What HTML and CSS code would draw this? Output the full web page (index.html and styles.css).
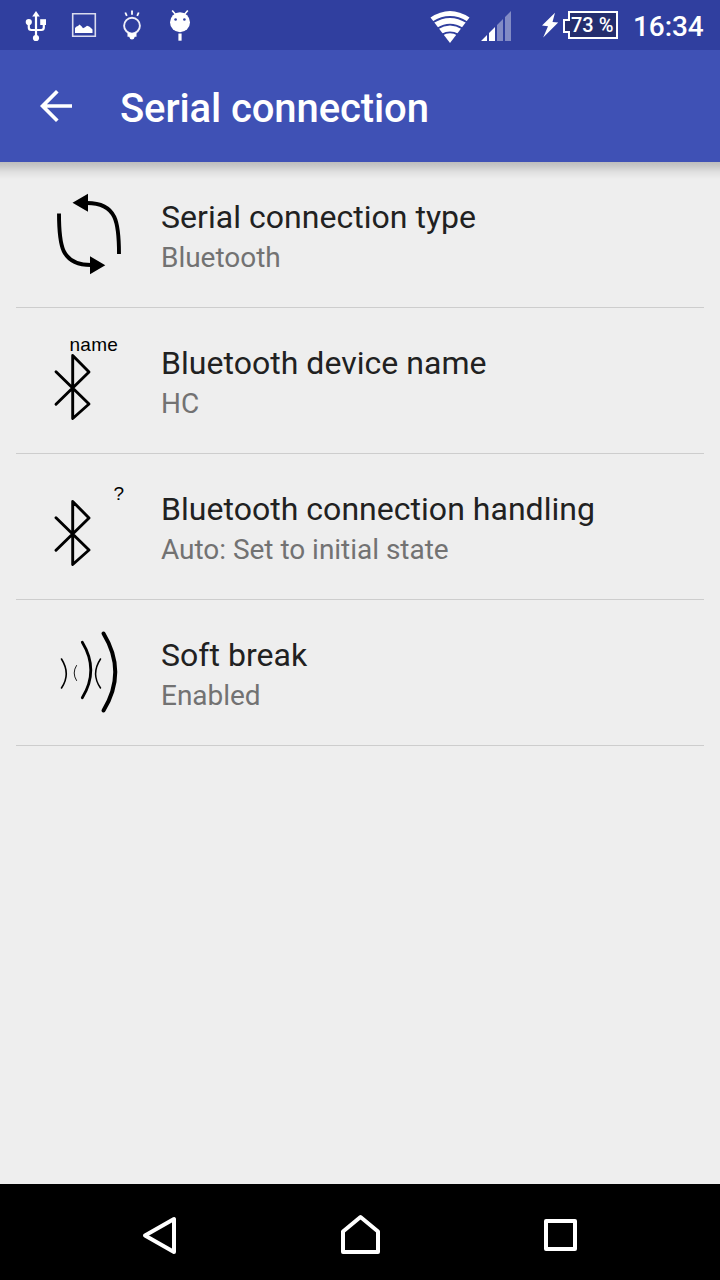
FILE: index.html
```html
<!DOCTYPE html>
<html lang="en">
<head>
<meta charset="utf-8">
<title>Serial connection</title>
<link rel="stylesheet" href="styles.css">
</head>
<body>
<div class="screen">
  <div class="status-bar">
    <div class="notifications">
      <svg class="status-icon" viewBox="12 0 48 50" fill="#fff">
        <path d="M36 11l3.8 5.4h-7.6z"/><circle cx="36" cy="38" r="3.1"/><circle cx="28.8" cy="22" r="3.1"/><path d="M40.2 19.2h5.8v5.8h-5.8z"/>
        <path d="M36 15v22M28.8 23v4.500q0 2.500 2.500 2.500h10q2.500 0 2.500-2.500V23" fill="none" stroke="#fff" stroke-width="2.200"/>
      </svg>
      <svg class="status-icon" viewBox="60 0 48 50" fill="#fff">
        <path d="M72.700 13.700h22.600v22.600H72.700z" fill="none" stroke="#d9dbee" stroke-width="1.600"/>
        <path d="M75 33v-5l1.500-1.500 1.500-.5 1.500-1.600 2 1.800 1.500 2 2-1 2-1.500 2.200.8 1.800 1.500 1.500 1.500V33z"/>
      </svg>
      <svg class="status-icon" viewBox="108 0 48 50" fill="#fff">
        <path d="M125.300 12.500l1.500 3.300M132 10.500v4.200M138.700 12.500l-1.500 3.300" stroke="#fff" stroke-width="1.800"/>
        <circle cx="132" cy="25.700" r="7.900" fill="none" stroke="#eeeef8" stroke-width="1.900"/>
        <path d="M127.500 32.500q4.500 1.600 9 0v4.300h-1.700q-.5 2.700-2.800 2.700t-2.800-2.700h-1.700z"/>
      </svg>
      <svg class="status-icon" viewBox="156 0 48 50" fill="#fff">
        <circle cx="180" cy="22.200" r="10"/><path d="M172.200 10.500l3.400 4M187.800 10.500l-3.400 4" stroke="#fff" stroke-width="1.600"/>
        <path d="M178.400 33.500h3.200v7.200h-3.200z"/>
        <g fill="#303f9f"><circle cx="175.600" cy="19.500" r="1.300"/><circle cx="184.400" cy="19.500" r="1.300"/></g>
      </svg>
    </div>
    <div class="system-status">
      <svg class="wifi" viewBox="430 0 40 50">
        <path d="M450 43L430.500 17.500Q450 4.500 469.500 17.500z" fill="#fff"/>
        <path d="M433 22.300q17-10.600 34 0M437.500 28.400q12.500-7.600 25 0M442 34.600q8-4.600 16 0" fill="none" stroke="#303f9f" stroke-width="1.800"/>
      </svg>
      <svg class="signal" viewBox="481 0 31 50" fill="#fff">
        <path d="M481 41l6-6v6zM489 41v-8l6-6v14z"/>
        <path d="M497 41V25l6-6v22zM505 41V17l6-6v30z" fill-opacity=".4"/>
      </svg>
      <svg class="bolt" viewBox="541 0 18 50"><path d="M555 12.700L542 25.500l6 .7-4.800 11.300L558.200 22.500l-5.700-.4z" fill="#fff"/></svg>
      <div class="battery">
        <svg class="battery-shell" viewBox="563 11 55 28"><path d="M569 12h48v26h-48v-6h-5V20h5z" fill="#242d6e" stroke="#fff" stroke-width="2"/></svg>
        <span class="battery-level">73 %</span>
      </div>
      <span class="clock">16:34</span>
    </div>
  </div>
  <header class="app-bar">
    <svg class="back" viewBox="40 90 32 32"><path d="M57.300 91.300L42.600 106l14.700 14.700M42.600 106H72" fill="none" stroke="#fff" stroke-width="3.700"/></svg>
    <h1 class="app-title">Serial connection</h1>
  </header>
  <main class="settings">
    <div class="setting">
      <svg class="setting-icon" viewBox="40 180 96 110">
        <path d="M59 213.500C59 245 61 265 91 265M119 254C119 223 117 203 87 203" fill="none" stroke="#000" stroke-width="3.900"/>
        <path d="M72.500 202.700L88 193.700v18zM105.300 265.300L90 256.300v18z"/>
      </svg>
      <div class="setting-text"><div class="setting-name">Serial connection type</div><div class="setting-value">Bluetooth</div></div>
    </div>
    <div class="setting">
      <svg class="setting-icon" viewBox="40 326 96 110">
        <path d="M56 371.700L89 404l-16.300 14.500v-63L89 372l-33 32.300" fill="none" stroke="#000" stroke-width="2.900" stroke-linecap="round" stroke-linejoin="round"/>
        <text class="icon-label" x="69.600" y="350.700">name</text>
      </svg>
      <div class="setting-text"><div class="setting-name">Bluetooth device name</div><div class="setting-value">HC</div></div>
    </div>
    <div class="setting">
      <svg class="setting-icon" viewBox="40 472 96 110">
        <path d="M56 517.700L89 550l-16.300 14.500v-63L89 518l-33 32.300" fill="none" stroke="#000" stroke-width="2.900" stroke-linecap="round" stroke-linejoin="round"/>
        <text class="icon-label" x="113.600" y="500">?</text>
      </svg>
      <div class="setting-text"><div class="setting-name">Bluetooth connection handling</div><div class="setting-value">Auto: Set to initial state</div></div>
    </div>
    <div class="setting">
      <svg class="setting-icon" viewBox="40 618 96 110" fill="none" stroke="#000" stroke-linecap="round">
        <path d="M61.500 659q9.500 15 0 29" stroke-width="1.600"/>
        <path d="M76.500 665.500q-4.800 7.500 0 15" stroke-width=".9"/>
        <path d="M82.300 642.300q17 28 0 55.500" stroke-width="2.800"/>
        <path d="M100.500 659q-9.800 15 0 29" stroke-width="1.500"/>
        <path d="M103.500 633.500q23.500 38.500 0 77" stroke-width="4"/>
      </svg>
      <div class="setting-text"><div class="setting-name">Soft break</div><div class="setting-value">Enabled</div></div>
    </div>
  </main>
  <nav class="nav-bar">
    <svg class="nav-icon" viewBox="140 1212 40 46"><path d="M174 1219v33l-29-16.500z"/></svg>
    <svg class="nav-icon" viewBox="340 1212 40 46"><path d="M343 1252v-20.500l17.500-14.500 17.500 14.500V1252z"/></svg>
    <svg class="nav-icon" viewBox="540 1212 40 46"><path d="M546 1221h29v28h-29z"/></svg>
  </nav>
</div>
</body>
</html>
```
FILE: styles.css
```css
* { box-sizing: border-box; }
body { margin: 0; font-family: Roboto, sans-serif; background: #eee; }
svg { display: block; flex: none; }
.screen { width: 720px; height: 1280px; display: flex; flex-direction: column; overflow: hidden; }
.status-bar { height: 50px; flex: none; display: flex; justify-content: space-between; align-items: center; padding: 0 16px 0 12px; background: #303f9f; color: #fff; }
.notifications, .system-status { display: flex; align-items: center; }
.status-icon { width: 48px; height: 50px; }
.wifi { width: 40px; height: 50px; margin-right: 11px; }
.signal { width: 31px; height: 50px; margin-right: 29px; }
.bolt { width: 18px; height: 50px; margin-right: 4px; }
.battery { display: grid; width: 55px; height: 28px; }
.battery-shell, .battery-level { grid-area: 1 / 1; }
.battery-shell { width: 55px; height: 28px; }
.battery-level { padding-left: 8px; font-size: 20px; font-weight: 500; line-height: 28px; white-space: nowrap; }
.clock { width: 71px; margin-left: 15px; padding-top: 4px; font-size: 28px; font-weight: 500; line-height: 46px; letter-spacing: -0.1px; white-space: nowrap; }
.app-bar { height: 112px; flex: none; display: flex; align-items: center; gap: 48px; padding-left: 40px; background: #3f51b5; color: #fff; }
.back { width: 32px; height: 32px; }
.app-title { margin: 6px 0 0; font-size: 40px; font-weight: 500; line-height: 48px; letter-spacing: -0.1px; white-space: nowrap; }
.settings { flex: 1; padding: 0 16px; background: linear-gradient(#bdbdbd, #c8c8c8 4px, #e0e0e0 10px, #eee 17px) no-repeat; }
.setting { height: 146px; display: flex; align-items: center; padding-left: 24px; border-bottom: 1px solid #cdcdcd; }
.setting-icon { width: 96px; height: 110px; }
.icon-label { font-family: "Liberation Sans", Arial, sans-serif; font-size: 19px; letter-spacing: 0.2px; fill: #000; }
.setting-text { padding: 5px 0 0 25px; }
.setting-name { font-size: 32px; line-height: 42px; letter-spacing: 0.03px; color: #212121; white-space: nowrap; }
.setting-value { font-size: 28px; line-height: 40px; letter-spacing: -0.03px; color: #727272; white-space: nowrap; }
.nav-bar { height: 96px; flex: none; display: flex; align-items: center; justify-content: space-between; padding: 6px 140px 0; background: #000; }
.nav-icon { width: 40px; height: 46px; fill: none; stroke: #fff; stroke-width: 4; stroke-linejoin: round; }
```
